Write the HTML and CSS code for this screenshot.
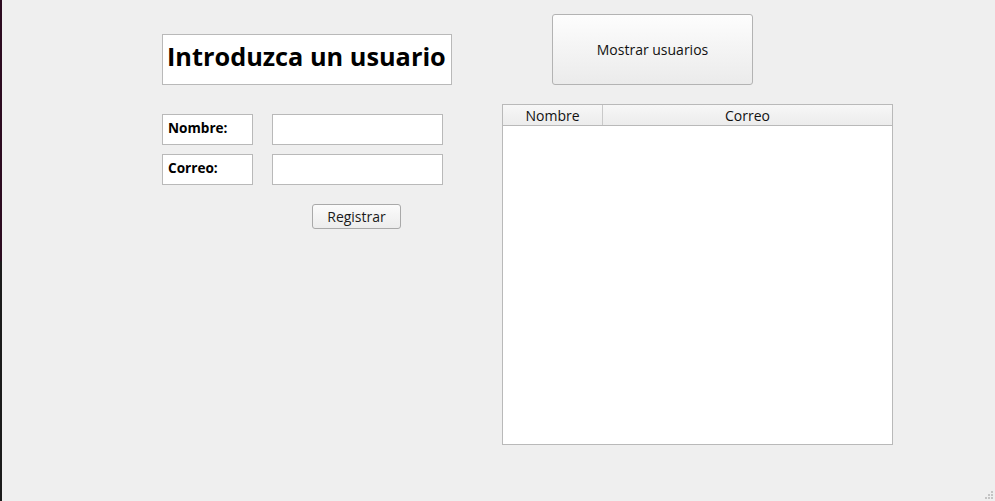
FILE: index.html
```html
<!DOCTYPE html>
<html lang="es">
<head>
<meta charset="utf-8">
<title>Usuarios</title>
<link rel="stylesheet" href="styles.css">
</head>
<body>
<div class="window">
  <div class="strip"></div>
  <div class="content">
    <div class="left">
      <div class="title">Introduzca un usuario</div>
      <div class="form">
        <div class="row">
          <div class="label">Nombre:</div>
          <input class="field" type="text">
        </div>
        <div class="row">
          <div class="label">Correo:</div>
          <input class="field" type="text">
        </div>
      </div>
      <div class="actions">
        <button class="btn small">Registrar</button>
      </div>
    </div>
    <div class="right">
      <button class="btn big">Mostrar usuarios</button>
      <div class="table">
        <div class="thead">
          <div class="th c1">Nombre</div>
          <div class="th c2">Correo</div>
        </div>
        <div class="tbody"></div>
      </div>
    </div>
  </div>
  <div class="grip">
    <span></span><span></span><span></span>
  </div>
</div>
</body>
</html>
```
FILE: styles.css
```css
* { box-sizing: border-box; }
html, body {
  margin: 0;
  padding: 0;
  width: 995px;
  height: 501px;
  overflow: hidden;
  background: #efefef;
  font-family: "Open Sans", "DejaVu Sans", sans-serif;
  color: #000;
}
.window {
  position: relative;
  display: flex;
  width: 995px;
  height: 501px;
}
.strip {
  width: 2px;
  flex: none;
  background: linear-gradient(#2c0b20 0, #2c0b20 260px, #1b1b1b 262px, #1b1b1b 100%);
}
.content {
  display: flex;
  padding-left: 160px;
  gap: 50px;
}
.left {
  width: 290px;
  padding-top: 34px;
  display: flex;
  flex-direction: column;
}
.title {
  height: 51px;
  background: #fff;
  border: 1px solid #b9b9b9;
  font-weight: 700;
  font-size: 25.3px;
  line-height: 42px;
  padding-left: 4px;
}
.form {
  margin-top: 29px;
  display: flex;
  flex-direction: column;
  gap: 9px;
}
.row {
  display: flex;
  gap: 19px;
}
.label {
  width: 91px;
  height: 31px;
  background: #fff;
  border: 1px solid #b9b9b9;
  font-weight: 700;
  font-size: 13.6px;
  line-height: 25px;
  padding-left: 5px;
}
.field {
  width: 171px;
  height: 31px;
  margin: 0;
  background: #fff;
  border: 1px solid #b9b9b9;
  border-radius: 0;
  outline: none;
  padding: 0 4px;
}
.actions {
  margin-top: 19px;
  padding-left: 150px;
}
.btn {
  margin: 0;
  padding: 0;
  font-family: inherit;
  color: #1a1a1a;
  border: 1px solid #a9a9a9;
  border-radius: 3px;
  background: linear-gradient(#fbfbfb, #ececec);
}
.small {
  width: 89px;
  height: 25px;
  font-size: 14px;
  line-height: 22px;
}
.right {
  width: 391px;
  padding-top: 14px;
  display: flex;
  flex-direction: column;
}
.big {
  width: 201px;
  height: 71px;
  margin-left: 50px;
  font-size: 14px;
  color: #111;
  border-color: #b3b3b3;
  background: linear-gradient(#fdfdfd, #ebebeb);
}
.table {
  margin-top: 19px;
  width: 391px;
  height: 341px;
  border: 1px solid #b9b9b9;
  background: #fff;
  display: flex;
  flex-direction: column;
}
.thead {
  display: flex;
  height: 21px;
  border-bottom: 1px solid #b9b9b9;
  background: linear-gradient(#f7f7f7, #ececec);
}
.th {
  font-size: 14px;
  line-height: 21px;
  text-align: center;
  color: #111;
}
.c1 {
  width: 100px;
  border-right: 1px solid #c9c9c9;
}
.c2 { flex: 1; }
.tbody { flex: 1; }
.grip {
  position: absolute;
  right: 2px;
  bottom: 2px;
  width: 8px;
  height: 8px;
}
.grip span {
  position: absolute;
  width: 2px;
  height: 2px;
  background: #c4c4c4;
}
.grip span:nth-child(1) { right: 0; bottom: 0; box-shadow: -3px 0 #c4c4c4, 0 -3px #c4c4c4; }
.grip span:nth-child(2) { right: 6px; bottom: 0; }
.grip span:nth-child(3) { right: 0; bottom: 6px; box-shadow: -3px 3px #c4c4c4; }
```
